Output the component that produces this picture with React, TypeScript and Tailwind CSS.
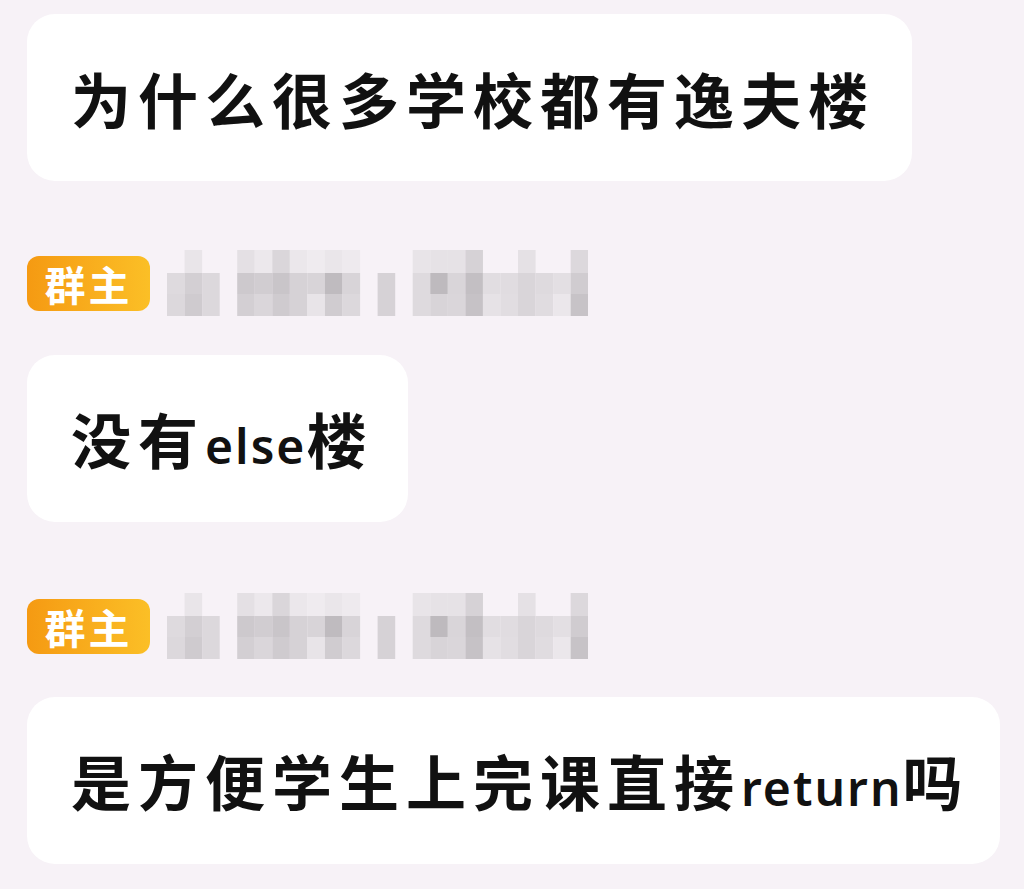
import React from "react";

// 马赛克昵称：每列 [上, 中, 下] 三格的灰度，null 表示透明
const mosaicCols: (string | null)[][] = [
  [null, "#dedade", "#dcd8dc"],
  ["#e9e5e9", "#d3cfd3", "#cfcbcf"],
  [null, "#dcd8dc", "#dcd8dc"],
  [null, null, null],
  ["#e4e0e4", "#cdc9cd", "#d3cfd3"],
  ["#ece8ec", "#d1cdd1", "#dad6da"],
  ["#dad6da", "#c9c5c9", "#cfcbcf"],
  ["#ebe7eb", "#d6d2d6", "#d6d2d6"],
  ["#efebef", "#d8d4d8", "#e8e4e8"],
  ["#eae6ea", "#bfbbbf", "#d0ccd0"],
  ["#eeeaee", "#d8d4d8", "#dcd8dc"],
  [null, null, null],
  [null, "#d6d2d6", "#d6d2d6"],
  [null, null, null],
  ["#e8e4e8", "#dedade", "#dedade"],
  ["#e6e2e6", "#bebabe", "#d8d4d8"],
  ["#e6e2e6", "#d9d5d9", "#dad6da"],
  ["#d6d2d6", "#c3bfc3", "#c6c2c6"],
  [null, "#e1dde1", "#e6e2e6"],
  [null, "#e0dce0", "#e1dde1"],
  ["#e5e1e5", "#d9d5d9", "#d9d5d9"],
  [null, "#dedade", "#e0dce0"],
  [null, "#e3dfe3", "#ebe7eb"],
  ["#dcd8dc", "#d0ccd0", "#c7c3c7"],
];

const rowY = [0, 23, 44];
const rowH = [23, 21, 22];

const Mosaic: React.FC = () => (
  <svg width="421" height="66" viewBox="0 0 421 66" className="block blur-[0.6px]">
    {mosaicCols.map((col, i) =>
      col.map((c, r) =>
        c ? (
          <rect
            key={`${i}-${r}`}
            x={i * 17.55}
            y={rowY[r]}
            width={17.6}
            height={rowH[r]}
            fill={c}
          />
        ) : null
      )
    )}
  </svg>
);

const OwnerBadge: React.FC = () => (
  <div className="w-[123px] h-[55px] rounded-[12px] bg-gradient-to-r from-[#f59a12] to-[#fbbf26] flex items-center justify-center">
    <span className="text-white font-bold text-[41px] leading-none tracking-[3px] [font-family:'Noto_Sans_CJK_SC',sans-serif]">
      群主
    </span>
  </div>
);

const SenderRow: React.FC = () => (
  <div className="flex items-center gap-[17px] h-[66px]">
    <OwnerBadge />
    <Mosaic />
  </div>
);

const Bubble: React.FC<{ width: string; children: React.ReactNode }> = ({ width, children }) => (
  <div className={`${width} h-[167px] bg-white rounded-[28px] flex items-center pl-[44px]`}>
    <p className="text-[#111111] font-bold text-[60px] leading-none tracking-[7px] whitespace-nowrap [font-family:'Noto_Sans_CJK_SC',sans-serif]">
      {children}
    </p>
  </div>
);

const Latin: React.FC<{ children: React.ReactNode; spacing: string }> = ({ children, spacing }) => (
  <span className={`text-[48px] font-semibold ${spacing} [font-family:'Noto_Sans',sans-serif]`}>{children}</span>
);

const App: React.FC = () => {
  return (
    <div className="w-[1024px] h-[889px] bg-[#f7f2f7] overflow-hidden pt-[14px] pl-[27px]">
      <div className="flex flex-col">
        {/* 第一条消息 */}
        <Bubble width="w-[885px]">为什么很多学校都有逸夫楼</Bubble>

        <div className="mt-[69px] mb-[39px]">
          <SenderRow />
        </div>

        {/* 群主回复 */}
        <Bubble width="w-[381px]">
          没有<Latin spacing="tracking-[2px]">else</Latin>楼
        </Bubble>

        <div className="mt-[71px] mb-[38px]">
          <SenderRow />
        </div>

        <Bubble width="w-[973px]">
          是方便学生上完课直接<Latin spacing="tracking-[2px]">return</Latin>吗
        </Bubble>
      </div>
    </div>
  );
};

export default App;
